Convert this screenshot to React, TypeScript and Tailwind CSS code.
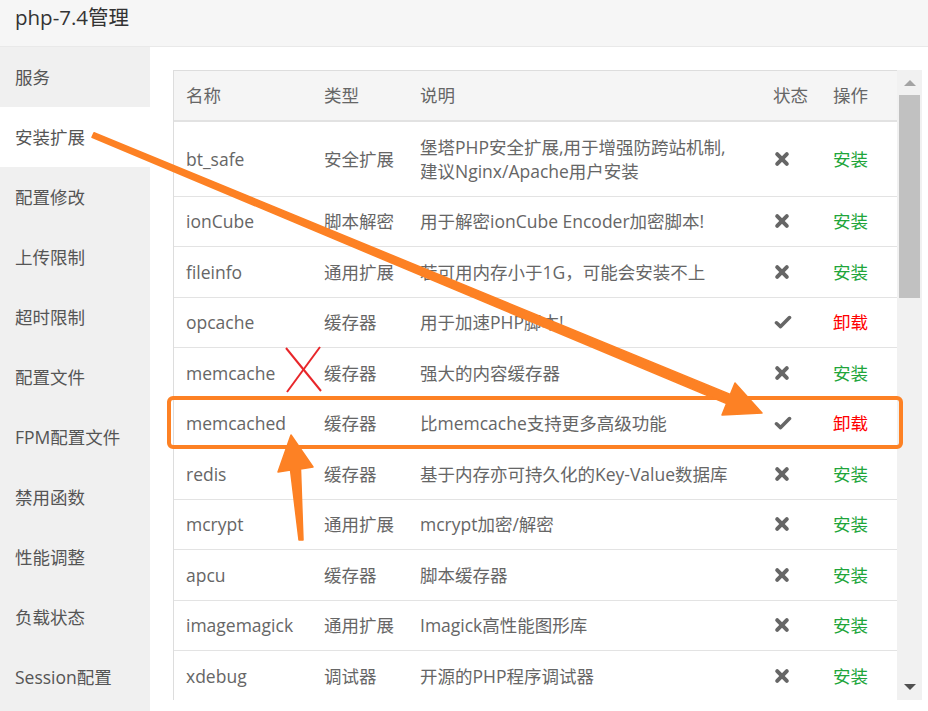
const menu = ['服务', '安装扩展', '配置修改', '上传限制', '超时限制', '配置文件', 'FPM配置文件', '禁用函数', '性能调整', '负载状态', 'Session配置']

type Ext = { name: string; type: string; desc: React.ReactNode; installed: boolean; tall?: boolean }

const exts: Ext[] = [
  {
    name: 'bt_safe',
    type: '安全扩展',
    desc: (
      <>
        堡塔PHP安全扩展,用于增强防跨站机制,
        <br />
        建议Nginx/Apache用户安装
      </>
    ),
    installed: false,
    tall: true,
  },
  { name: 'ionCube', type: '脚本解密', desc: '用于解密ionCube Encoder加密脚本!', installed: false },
  { name: 'fileinfo', type: '通用扩展', desc: '若可用内存小于1G，可能会安装不上', installed: false },
  { name: 'opcache', type: '缓存器', desc: '用于加速PHP脚本!', installed: true },
  { name: 'memcache', type: '缓存器', desc: '强大的内容缓存器', installed: false },
  { name: 'memcached', type: '缓存器', desc: '比memcache支持更多高级功能', installed: true },
  { name: 'redis', type: '缓存器', desc: '基于内存亦可持久化的Key-Value数据库', installed: false },
  { name: 'mcrypt', type: '通用扩展', desc: 'mcrypt加密/解密', installed: false },
  { name: 'apcu', type: '缓存器', desc: '脚本缓存器', installed: false },
  { name: 'imagemagick', type: '通用扩展', desc: 'Imagick高性能图形库', installed: false },
  { name: 'xdebug', type: '调试器', desc: '开源的PHP程序调试器', installed: false },
]

function CrossIcon() {
  return (
    <svg width="16" height="16" viewBox="0 0 16 16" className="block">
      <path d="M3.2 3.2L12.8 12.8M12.8 3.2L3.2 12.8" stroke="#666" strokeWidth="4" strokeLinecap="round" />
    </svg>
  )
}

function CheckIcon() {
  return (
    <svg width="18" height="16" viewBox="0 0 18 16" className="block">
      <path d="M2.5 8.8L6.6 12.6L15.5 3.6" fill="none" stroke="#666" strokeWidth="3.6" strokeLinecap="round" strokeLinejoin="round" />
    </svg>
  )
}

function Overlay() {
  return (
    <svg className="absolute left-0 top-0 pointer-events-none" width="928" height="711" viewBox="0 0 928 711">
      {/* red cross */}
      <line x1="286" y1="348" x2="321" y2="391" stroke="#e8262a" strokeWidth="2" />
      <line x1="320" y1="347" x2="287" y2="392" stroke="#e8262a" strokeWidth="2" />
      {/* highlight box */}
      <rect x="169" y="398" width="732" height="49" rx="4" fill="none" stroke="#fd8124" strokeWidth="4" />
      {/* long arrow */}
      <polygon
        points="94,132.7 730.4,394.4 735,383 762,413 722,415 726.6,403.6 92,137.3"
        fill="#fd8124"
        stroke="#fd8124"
        strokeWidth="1.5"
        strokeLinejoin="round"
      />
      {/* short arrow */}
      <polygon
        points="303,540 300.5,469 313,467 291,435 278,472 290.5,470 299,540"
        fill="#fd8124"
        stroke="#fd8124"
        strokeWidth="1.5"
        strokeLinejoin="round"
      />
    </svg>
  )
}

export default function App() {
  return (
    <div
      className="relative w-[928px] h-[711px] overflow-hidden bg-white"
      style={{ fontFamily: '"Open Sans", "Noto Sans CJK SC", sans-serif' }}
    >
      <div className="h-[47px] bg-[#f6f6f6] border-b border-[#e9e9e9] pl-[15px] text-[20.5px] leading-[34px] text-[#333]">
        php-7.4管理
      </div>

      <div className="flex h-[664px]">
        <div className="w-[150px] bg-[#f0f0f0] flex flex-col">
          {menu.map((m, i) => (
            <div
              key={m}
              className={`h-[60px] shrink-0 pl-[15px] flex items-center text-[17.5px] text-[#555] ${i === 1 ? 'bg-white' : ''}`}
            >
              {m}
            </div>
          ))}
        </div>

        <div className="flex-1 pl-[23px] pt-[23px]">
          <div className="flex h-[630px]">
            <div className="w-[724px] overflow-hidden border-l border-t border-[#dddddd]">
              <table className="w-[723px] table-fixed border-collapse text-[17.5px] text-[#666]">
                <colgroup>
                  <col className="w-[138px]" />
                  <col className="w-[96px]" />
                  <col className="w-[353px]" />
                  <col className="w-[60px]" />
                  <col className="w-[76px]" />
                </colgroup>
                <thead>
                  <tr className="h-[50px] bg-[#f5f5f5] border-b-2 border-[#e2e2e2]">
                    <th className="text-left font-normal pl-[12px]">名称</th>
                    <th className="text-left font-normal pl-[12px]">类型</th>
                    <th className="text-left font-normal pl-[12px]">说明</th>
                    <th className="text-left font-normal pl-[12px]">状态</th>
                    <th className="text-left font-normal pl-[12px]">操作</th>
                  </tr>
                </thead>
                <tbody>
                  {exts.map((e) => (
                    <tr key={e.name} className={`${e.tall ? 'h-[75px]' : 'h-[50.5px]'} border-b border-[#e3e3e3]`}>
                      <td className="pl-[12px] whitespace-nowrap">{e.name}</td>
                      <td className="pl-[12px] whitespace-nowrap">{e.type}</td>
                      <td className="pl-[12px] whitespace-nowrap leading-[24px]">{e.desc}</td>
                      <td className="pl-[13px]">{e.installed ? <CheckIcon /> : <CrossIcon />}</td>
                      <td className="pl-[12px]">
                        {e.installed ? (
                          <span className="text-[#ff0000]">卸载</span>
                        ) : (
                          <span className="text-[#20a53a]">安装</span>
                        )}
                      </td>
                    </tr>
                  ))}
                </tbody>
              </table>
            </div>

            <div className="w-[25px] bg-[#f1f1f1] flex flex-col items-center">
              <div className="h-[25px] flex items-center justify-center">
                <div className="w-0 h-0 border-l-[6px] border-r-[6px] border-b-[6px] border-l-transparent border-r-transparent border-b-[#a3a3a3]" />
              </div>
              <div className="w-[21px] h-[203px] bg-[#c1c1c1]" />
              <div className="flex-1" />
              <div className="h-[27px] flex items-center justify-center">
                <div className="w-0 h-0 border-l-[6px] border-r-[6px] border-t-[6px] border-l-transparent border-r-transparent border-t-[#505050]" />
              </div>
            </div>
          </div>
        </div>
      </div>

      <Overlay />
    </div>
  )
}
